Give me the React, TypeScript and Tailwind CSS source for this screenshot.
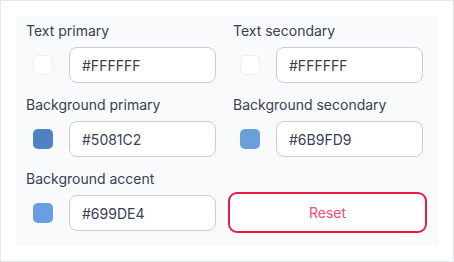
import React from "react";

type ColorField = {
  label: string;
  value: string;
  swatch: string;
};

const FIELDS: ColorField[] = [
  { label: "Text primary", value: "#FFFFFF", swatch: "#FFFFFF" },
  { label: "Text secondary", value: "#FFFFFF", swatch: "#FFFFFF" },
  { label: "Background primary", value: "#5081C2", swatch: "#5081C2" },
  { label: "Background secondary", value: "#6B9FD9", swatch: "#6B9FD9" },
  { label: "Background accent", value: "#699DE4", swatch: "#699DE4" },
];

function ColorInput({ field }: { field: ColorField }) {
  const isWhite = field.swatch.toUpperCase() === "#FFFFFF";
  return (
    <div className="flex flex-col">
      <label className="h-5 text-sm leading-5 text-[#374151]">{field.label}</label>
      <div className="mt-[6px] flex items-center gap-4">
        <span
          className={
            isWhite
              ? "ml-[7px] h-5 w-5 shrink-0 rounded-[5px] border border-[#eceef2] bg-white"
              : "ml-[7px] h-5 w-5 shrink-0 rounded-[5px]"
          }
          style={isWhite ? undefined : { backgroundColor: field.swatch }}
        />
        <input
          readOnly
          value={field.value}
          className="h-9 w-[147px] rounded-lg border border-[#c9ced6] bg-white px-3 text-sm text-[#374151] outline-none"
        />
      </div>
    </div>
  );
}

export default function App() {
  return (
    <div
      className="h-[262px] w-[454px] border border-[#e2e8f0] bg-white p-[15px]"
      style={{ fontFamily: "Inter, 'Noto Sans', sans-serif" }}
    >
      <div className="h-[230px] w-[422px] bg-[#f8fafc] pl-[10px] pt-[5px]">
        <div className="grid grid-cols-[190px_190px] gap-x-[17px] gap-y-3">
          {FIELDS.map((f) => (
            <ColorInput key={f.label} field={f} />
          ))}
          <div className="flex flex-col justify-end">
            <button
              type="button"
              className="-mb-[2px] -ml-[5px] h-[41px] w-[199px] rounded-[9px] border-[2.5px] border-[#e11d48] bg-white text-sm text-[#f0506e]"
            >
              Reset
            </button>
          </div>
        </div>
      </div>
    </div>
  );
}
